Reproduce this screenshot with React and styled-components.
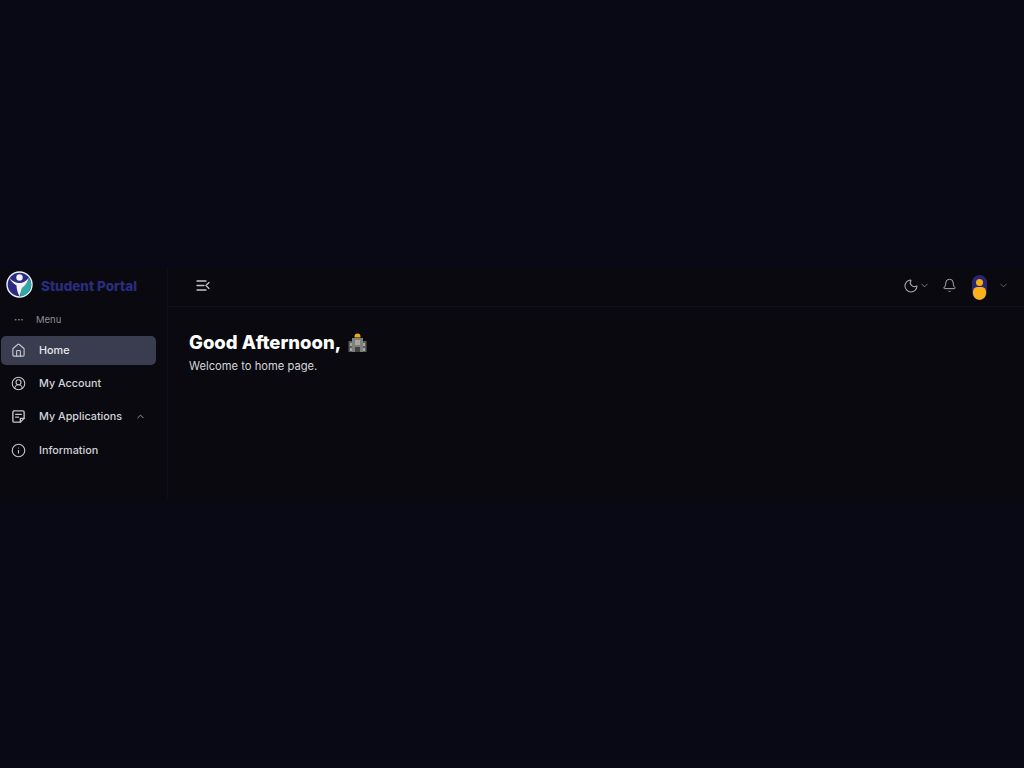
import styled, { createGlobalStyle } from "styled-components";
import { Home, CircleUserRound, Info, ChevronUp, ChevronDown, Moon, Bell } from "lucide-react";

const GlobalStyle = createGlobalStyle`
  html, body {
    margin: 0;
    padding: 0;
    background: #080914;
  }
`;

const LogoMark = () => (
  <svg width="27" height="27" viewBox="0 0 27 27">
    <circle cx="13.5" cy="13.5" r="13.2" fill="#f1f3f8" />
    <circle cx="13.5" cy="13.5" r="11.8" fill="#2b2a84" />
    <path d="M23 8c-2 4-4 7-7 9l-2 8.5a12 12 0 0 0 10-17z" fill="#2fa9a2" />
    <path d="M3.5 7c3 3.5 6.500 5 10 5s6.500-1.500 9.500-5.500c-1.500 5-4 8.500-7 10.500l-2.500 8.500c-2-4-3-8-3-11-3-2-5.500-4.500-7-7.500z" fill="#f1f3f8" />
    <circle cx="13.5" cy="6.500" r="3.200" fill="#f1f3f8" />
  </svg>
);

const MenuIcon = () => (
  <svg width="14" height="11" viewBox="0 0 14 11" fill="none" stroke="#c4c5cc" strokeWidth="1.3" strokeLinecap="round">
    <path d="M1 1h9M1 5.500h7M1 10h9M13 2.500l-3 3 3 3" />
  </svg>
);

const NoteIcon = () => (
  <svg width="15" height="15" viewBox="0 0 24 24" fill="none" stroke="currentColor" strokeWidth="2.200" strokeLinecap="round" strokeLinejoin="round">
    <path d="M15 21H5a2 2 0 0 1-2-2V5a2 2 0 0 1 2-2h14a2 2 0 0 1 2 2v10z" />
    <path d="M21 15h-6v6M7.500 8.500h9M7.500 13h4.500" />
  </svg>
);

const BuildingEmoji = () => (
  <svg width="19" height="20" viewBox="0 0 19 20">
    <rect x="0.500" y="9" width="18" height="11" fill="#5a5f5c" />
    <rect x="4" y="6" width="11" height="14" fill="#7b807c" />
    <path d="M6.500 4.500a3 3 0 0 1 6 0v1h-6z" fill="#e9a91a" />
    <rect x="2" y="11" width="2" height="3" fill="#a2a5a0" />
    <rect x="15" y="11" width="2" height="3" fill="#a2a5a0" />
    <rect x="7" y="8" width="5" height="5" fill="#a9a79a" />
    <rect x="2" y="16" width="2" height="3" fill="#a2a5a0" />
    <rect x="15" y="16" width="2" height="3" fill="#a2a5a0" />
    <rect x="7" y="15" width="5" height="5" fill="#3f4543" />
  </svg>
);

const Avatar = () => (
  <AvatarShape>
    <AvatarHead />
    <AvatarBody />
  </AvatarShape>
);

const items = [
  { label: "Home", icon: Home, active: true },
  { label: "My Account", icon: CircleUserRound },
  { label: "My Applications", icon: NoteIcon, open: true },
  { label: "Information", icon: Info },
];

export default function App() {
  return (
    <Page>
      <GlobalStyle />
      <Shell>
        <Sidebar>
          <Brand>
            <LogoMark />
            <BrandName>Student Portal</BrandName>
          </Brand>
          <SectionLabel>
            <Dots>···</Dots>
            <span>Menu</span>
          </SectionLabel>
          <Nav>
            {items.map(({ label, icon: Icon, active, open }) => (
              <NavItem key={label} $active={active}>
                <Icon size={15} strokeWidth={1.8} />
                <NavLabel>{label}</NavLabel>
                {open && <Caret><ChevronUp size={11} strokeWidth={1.6} /></Caret>}
              </NavItem>
            ))}
          </Nav>
        </Sidebar>
        <Main>
          <TopBar>
            <MenuIcon />
            <Actions>
              <ThemeToggle>
                <Moon size={16} strokeWidth={1.6} />
                <ChevronDown size={11} strokeWidth={1.5} />
              </ThemeToggle>
              <Bell size={15} strokeWidth={1.6} />
              <UserMenu>
                <Avatar />
                <ChevronDown size={11} strokeWidth={1.5} />
              </UserMenu>
            </Actions>
          </TopBar>
          <Content>
            <Heading>
              Good Afternoon,
              <BuildingEmoji />
            </Heading>
            <Welcome>Welcome to home page.</Welcome>
          </Content>
        </Main>
      </Shell>
    </Page>
  );
}

const Page = styled.div`
  height: 768px;
  padding-top: 268px;
  box-sizing: border-box;
  background: #080914;
  font-family: Inter, "Liberation Sans", sans-serif;
  overflow: hidden;
`;

const Shell = styled.div`
  display: flex;
  height: 230px;
  background: #09090f;
`;

const Sidebar = styled.aside`
  width: 168px;
  flex: none;
  box-sizing: border-box;
  border-right: 1px solid #101018;
  padding: 3px 11px 0 1px;
`;

const Brand = styled.div`
  display: flex;
  align-items: center;
  gap: 8px;
  padding-left: 5px;
  height: 27px;
`;

const BrandName = styled.span`
  position: relative;
  top: 1px;
  color: #2a2d7e;
  font-size: 13.5px;
  font-weight: 800;
  white-space: nowrap;
`;

const SectionLabel = styled.div`
  display: flex;
  align-items: center;
  gap: 13px;
  margin: 14px 0 0 13px;
  color: #8d8e94;
  font-size: 9.5px;
  height: 14px;
`;

const Dots = styled.span`
  font-weight: 700;
  width: 9px;
`;

const Nav = styled.nav`
  display: flex;
  flex-direction: column;
  gap: 4px;
  margin-top: 10px;
`;

const NavItem = styled.div`
  display: flex;
  align-items: center;
  height: 29.2px;
  padding: 0 10px;
  border-radius: 5px;
  color: ${({ $active }) => ($active ? "#e8e9ee" : "#d2d3d8")};
  background: ${({ $active }) => ($active ? "#3a3c50" : "transparent")};
  svg {
    flex: none;
    color: #c4c5cc;
  }
`;

const NavLabel = styled.span`
  margin-left: 13px;
  font-size: 10.8px;
  font-weight: 500;
  white-space: nowrap;
`;

const Caret = styled.span`
  display: flex;
  margin-left: auto;
  color: #9a9ba2;
`;

const Main = styled.main`
  flex: 1;
  min-width: 0;
`;

const TopBar = styled.header`
  display: flex;
  align-items: center;
  justify-content: space-between;
  height: 39px;
  box-sizing: border-box;
  padding: 0 15px 3px 28px;
  border-bottom: 1px solid #11111c;
`;

const Actions = styled.div`
  display: flex;
  align-items: center;
  gap: 12px;
  color: #a9aab1;
`;

const ThemeToggle = styled.div`
  display: flex;
  align-items: center;
`;

const UserMenu = styled.div`
  display: flex;
  align-items: center;
  gap: 11px;
  margin-left: 3px;
  color: #7d7e85;
`;

const AvatarShape = styled.div`
  position: relative;
  top: 2px;
  width: 15px;
  height: 25px;
  border-radius: 8px;
  background: #27276f;
  overflow: hidden;
`;

const AvatarHead = styled.div`
  position: absolute;
  top: 4px;
  left: 4px;
  width: 7px;
  height: 7px;
  border-radius: 50%;
  background: #f4ae1a;
`;

const AvatarBody = styled.div`
  position: absolute;
  top: 12px;
  left: 1px;
  width: 13px;
  height: 13px;
  border-radius: 5px 5px 7px 7px;
  background: #f9b21a;
`;

const Content = styled.div`
  padding: 23px 21px;
`;

const Heading = styled.h1`
  display: flex;
  align-items: center;
  gap: 7px;
  margin: 0;
  height: 23px;
  color: #ffffff;
  font-size: 18.5px;
  font-weight: 800;
  white-space: pre;
`;

const Welcome = styled.p`
  margin: 6px 0 0;
  color: #d4d5da;
  font-size: 11.2px;
  line-height: 14px;
`;
